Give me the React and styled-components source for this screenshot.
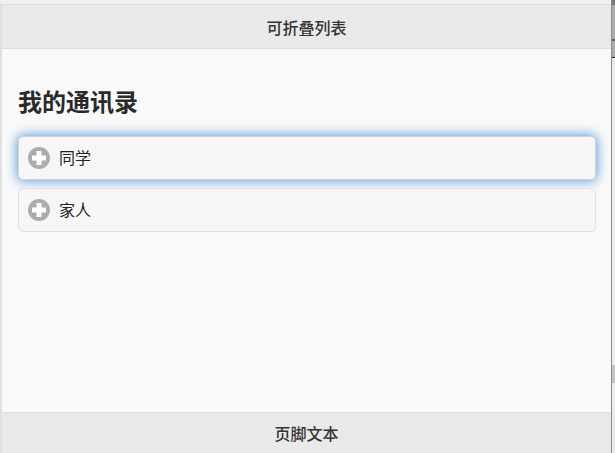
import React from 'react';
import styled, { createGlobalStyle } from 'styled-components';

const GlobalStyle = createGlobalStyle`
    html, body {
        margin: 0;
        height: 100%;
        background: #f9f9f9;
    }

    body {
        font-family: "Liberation Sans", "Noto Sans CJK SC", sans-serif;
        color: #333;
    }
`

const groups = [
    { name: "同学", focused: true },
    { name: "家人", focused: false },
];

function PlusIcon() {
    return (
        <svg width="22" height="22" viewBox="0 0 22 22">
            <circle cx="11" cy="11" r="11" fill="#acacac" />
            <path d="M8.500 4h5v4.500h4.500v5H13.500V18h-5V13.500H4v-5h4.500z" fill="#fff" />
        </svg>
    );
}

function App() {
    return (
        <>
            <GlobalStyle />
            <Page>
                <Frame>
                    <Bar $top>可折叠列表</Bar>
                    <Content>
                        <Title>我的通讯录</Title>
                        <List>
                            {groups.map((group) => (
                                <Row key={group.name} $focused={group.focused}>
                                    <PlusIcon />
                                    <RowLabel>{group.name}</RowLabel>
                                </Row>
                            ))}
                        </List>
                    </Content>
                    <Bar>页脚文本</Bar>
                </Frame>
                <Track>
                    <Thumb />
                </Track>
            </Page>
        </>
    );
}

const Page = styled.div`
    display: flex;
    width: 615px;
    height: 453px;
    overflow: hidden;
    background: linear-gradient(#f0f0f0 4px, #f9f9f9 4px);
`

const Frame = styled.div`
    flex: 1;
    display: flex;
    flex-direction: column;
    min-width: 0;
    margin-top: 4px;
    border-left: 2px solid #e0e0e0;
    background: #f9f9f9;
`

const Bar = styled.div`
    height: ${(props) => (props.$top ? "43px" : "40px")};
    flex: none;
    display: flex;
    align-items: center;
    justify-content: center;
    background: #e9e9e9;
    font-size: 16px;
    font-weight: 500;
    color: #333;
    border-top: 1px solid #ddd;
    border-bottom: ${(props) => (props.$top ? "1px solid #ddd" : "none")};
`

const Content = styled.main`
    flex: 1;
    padding: 0 15px 0 16px;
`

const Title = styled.h2`
    margin: 37px 0 17px;
    font-size: 24px;
    line-height: 33px;
    font-weight: 700;
    color: #2a2a2a;
`

const List = styled.div`
    display: flex;
    flex-direction: column;
    gap: 8px;
`

const Row = styled.div`
    height: 44px;
    box-sizing: border-box;
    display: flex;
    align-items: center;
    gap: 9px;
    padding-left: 9px;
    border: 1px solid ${(props) => (props.$focused ? "#d4d4d4" : "#e0e0e0")};
    border-radius: 5px;
    background: #f6f6f6;
    font-size: 16px;
    color: #222;
    box-shadow: ${(props) => (props.$focused ? "0 0 12px 1px #5a9ad8" : "none")};
`

const RowLabel = styled.span`
    padding-bottom: 2px;
`

const Track = styled.div`
    width: 3px;
    flex: none;
    border-left: 1px solid #8c8c8c;
    padding-top: 365px;
    background: linear-gradient(
        #777 0 5px,
        #aaa 5px 39px,
        #666 39px 41px,
        #aaa 41px 57px,
        #222 57px 58px,
        #ececec 58px
    );
`

const Thumb = styled.div`
    height: 18px;
    background: #c4c4c4;
`

export default App;
